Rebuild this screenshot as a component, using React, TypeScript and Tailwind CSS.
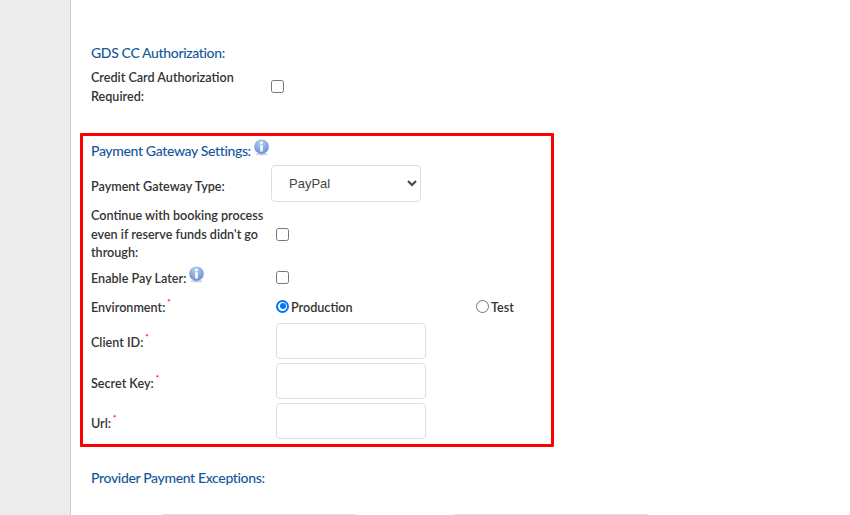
const lato = "font-['Lato','Noto_Sans',sans-serif]";

function Info({ className = "" }: { className?: string }) {
  return (
    <svg width="17" height="17" viewBox="0 0 17 17" className={className}>
      <defs>
        <radialGradient id="ig" cx="45%" cy="25%" r="85%">
          <stop offset="0%" stopColor="#b9cff2" />
          <stop offset="60%" stopColor="#7fa3e0" />
          <stop offset="100%" stopColor="#5f86cf" />
        </radialGradient>
      </defs>
      <ellipse cx="8.5" cy="15.2" rx="6" ry="1.3" fill="#c9cfd8" />
      <circle cx="8.5" cy="7.7" r="7.3" fill="url(#ig)" />
      <circle cx="8.5" cy="4" r="1.4" fill="#fff" />
      <rect x="7.2" y="6.2" width="2.6" height="6.2" rx="0.5" fill="#fff" />
    </svg>
  );
}

function Req({ className = "" }: { className?: string }) {
  return <span className={`inline-block text-[#ff0000] text-[8px] leading-none align-top font-bold ${className}`}>*</span>;
}

function Box() {
  return <span className="block w-[13px] h-[13px] rounded-[2.5px] border border-[#767676] bg-white" />;
}

function Field() {
  return <input className="block w-[150px] h-[36px] border border-[#dedede] rounded-[4px] bg-white outline-none" />;
}

export default function App() {
  return (
    <div className={`${lato} flex w-[850px] h-[515px] overflow-hidden bg-white text-[12.6px] font-semibold text-[#333333]`}>
      <aside className="w-[71px] shrink-0 bg-[#ececec] border-r border-[#cccccc]" />
      <main className="w-[474px] ml-[9px] shrink-0">
        <h2 className="mt-[43px] ml-[11px] text-[14px] tracking-[-0.35px] leading-[20px] font-medium text-[#14589c]">GDS CC Authorization:</h2>
        <div className="flex items-center mt-[5px] ml-[11px] h-[38px]">
          <div className="w-[180px] leading-[19px]">Credit Card Authorization<br />Required:</div>
          <span className="-mt-[1px]"><Box /></span>
        </div>
        <section className="mt-[27px] h-[314px] border-[3px] border-[#ff0000] rounded-[1px] pl-[8px]">
          <div className="flex items-start h-[29px]">
            <h2 className="mt-[5px] text-[14px] tracking-[-0.35px] leading-[20px] font-medium text-[#14589c]">Payment Gateway Settings:</h2>
            <Info className="ml-[2px] mt-[3px]" />
          </div>
          <div className="flex items-center h-[37px]">
            <div className="w-[180px] pt-[7px]">Payment Gateway Type:</div>
            <select defaultValue="PayPal" className="w-[150px] h-[37px] pl-[13px] border border-[#dedede] rounded-[4px] bg-white font-['Liberation_Sans',sans-serif] font-normal text-[13px] text-[#444] outline-none">
              <option>PayPal</option>
            </select>
          </div>
          <div className="flex items-center mt-[4px] h-[56px]">
            <div className="w-[185px] pt-[2px] leading-[18.5px] whitespace-nowrap">Continue with booking process<br />even if reserve funds didn't go<br />through:</div>
            <span className="mt-[1px]"><Box /></span>
          </div>
          <div className="flex items-center mt-[1px] h-[28px]">
            <div className="w-[185px] flex items-start whitespace-nowrap">
              <span className="mt-[4px]">Enable Pay Later:</span>
              <Info className="ml-[2px] mt-0" />
            </div>
            <Box />
          </div>
          <div className="flex items-center h-[31px]">
            <div className="w-[185px] pt-[4px]">Environment:<Req className="ml-[2px] -mt-[1px]" /></div>
            <label className="w-[200px] flex items-center">
              <span className="block w-[13px] h-[13px] rounded-full border-2 border-[#0075ff] p-[1.5px]"><span className="block w-full h-full rounded-full bg-[#0075ff]" /></span>
              <span className="ml-[2px] mt-[3px]">Production</span>
            </label>
            <label className="flex items-center">
              <span className="block w-[13px] h-[13px] rounded-full border border-[#767676]" />
              <span className="ml-[2px] mt-[3px]">Test</span>
            </label>
          </div>
          <div className="flex items-center h-[36px] mt-[1px]">
            <div className="w-[185px] pt-[4px]">Client ID:<Req className="ml-[2px] -mt-[1px]" /></div>
            <Field />
          </div>
          <div className="flex items-center h-[36px] mt-[4px]">
            <div className="w-[185px] pt-[6px]">Secret Key:<Req className="ml-[2px] -mt-[1px]" /></div>
            <Field />
          </div>
          <div className="flex items-center h-[36px] mt-[4px]">
            <div className="w-[185px] pt-[6px]">Url:<Req className="ml-[2px] -mt-[1px]" /></div>
            <Field />
          </div>
        </section>
        <h2 className="mt-[21px] ml-[11px] text-[14px] tracking-[-0.35px] leading-[20px] font-medium text-[#14589c]">Provider Payment Exceptions:</h2>
        <div className="flex mt-[26px] ml-[80px] gap-[94px]">
          <div className="w-[198px] shrink-0 h-[20px] border border-[#dedede] rounded-[4px]" />
          <div className="w-[198px] shrink-0 h-[20px] border border-[#dedede] rounded-[4px]" />
        </div>
      </main>
    </div>
  );
}
